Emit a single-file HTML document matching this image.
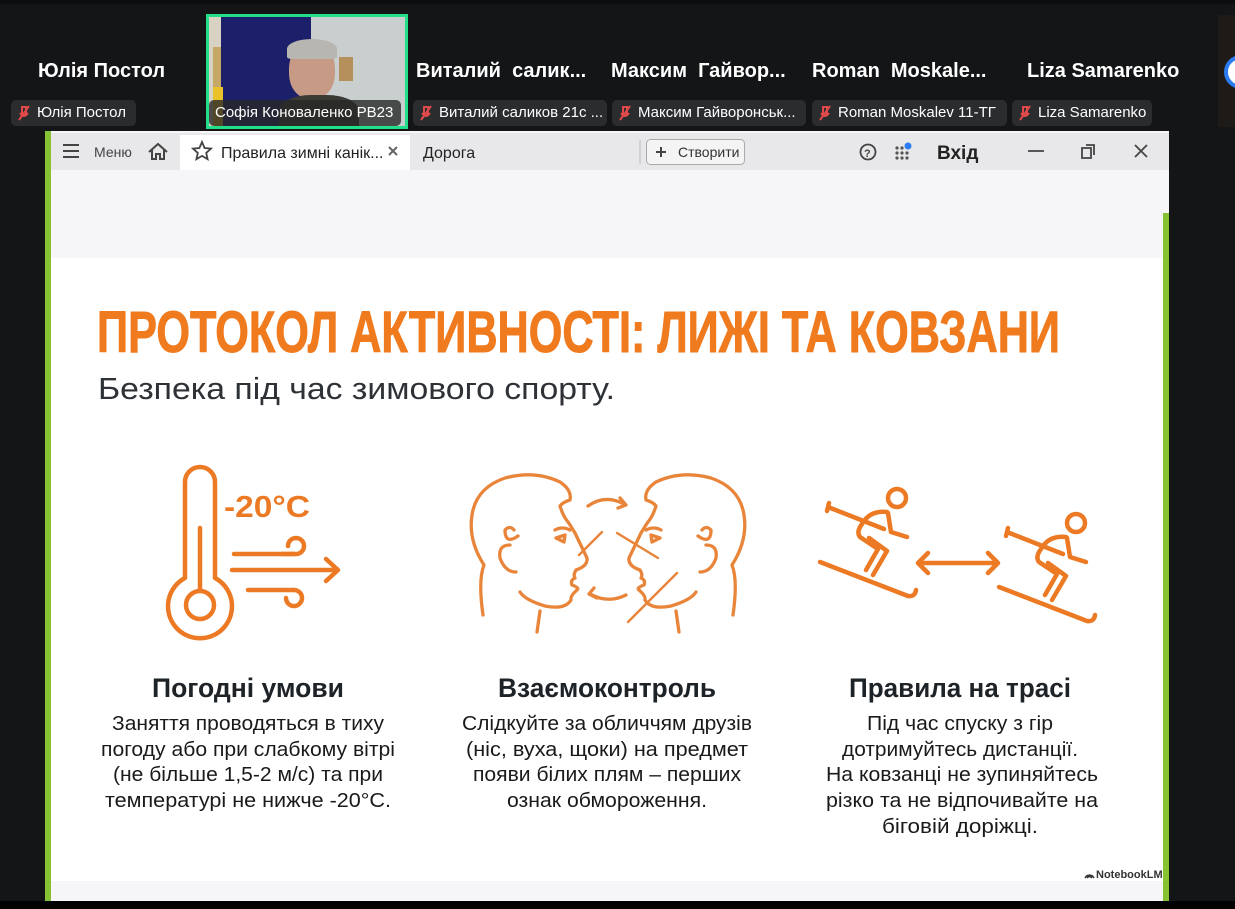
<!DOCTYPE html>
<html><head><meta charset="utf-8"><style>
*{margin:0;padding:0;box-sizing:border-box}
body{width:1235px;height:909px;background:#131517;position:relative;overflow:hidden;font-family:"Liberation Sans",sans-serif}
.abs{position:absolute}
.name{position:absolute;top:60px;color:#fff;font-weight:bold;font-size:20px;white-space:nowrap}
.pill{position:absolute;top:100px;height:26px;background:#2b2c2e;border-radius:5px;color:#fff;font-size:15px;line-height:26px;padding-left:26px;white-space:nowrap;overflow:hidden}
.pill svg{position:absolute;left:6px;top:5px}
</style></head><body>
<div class="abs" style="left:0;top:0;width:1235px;height:4px;background:#0c0d0e"></div>
<div class="name" style="left:38px">Юлія Постол</div>
<div class="name" style="left:416px">Виталий&nbsp; салик...</div>
<div class="name" style="left:611px">Максим&nbsp; Гайвор...</div>
<div class="name" style="left:812px">Roman&nbsp; Moskale...</div>
<div class="name" style="left:1027px">Liza Samarenko</div>
<div class="abs" style="left:1218px;top:15px;width:17px;height:112px;background:#1d1a17"></div>
<div class="abs" style="left:1224px;top:55px;width:34px;height:34px;border-radius:50%;border:4px solid #2b7cf0;background:#fff"></div>

<div class="abs" style="left:206px;top:14px;width:202px;height:115px;border:3px solid #22e08a;overflow:hidden;background:#c9cfcf">
 <div class="abs" style="left:0;top:0;width:12px;height:110px;background:#d8d2c4"></div>
 <div class="abs" style="left:4px;top:30px;width:8px;height:80px;background:#c5a866"></div>
 <div class="abs" style="left:12px;top:0;width:90px;height:110px;background:#1c1f6a"></div>
 <div class="abs" style="left:4px;top:70px;width:10px;height:40px;background:#e8c228"></div>
 <div class="abs" style="left:130px;top:40px;width:14px;height:24px;background:#b6905a"></div>
 <div class="abs" style="left:80px;top:26px;width:46px;height:56px;border-radius:45%;background:#c79a86"></div>
 <div class="abs" style="left:78px;top:22px;width:50px;height:20px;border-radius:50% 50% 10% 10%;background:#b7b6b0"></div>
 <div class="abs" style="left:70px;top:78px;width:80px;height:40px;border-radius:40% 40% 0 0;background:#3b3b36"></div>
</div>
<div class="pill" style="left:209px;top:100px;padding-left:6px;width:192px;background:rgba(40,40,40,.8)">Софія Коноваленко РВ23</div>

<div class="pill" style="left:11px;width:125px"><svg width="14" height="16"><path d="M5 2h4v8H5z M3 8q4 6 8 0" stroke="#e04a4a" fill="none" stroke-width="2"/><path d="M2 15L12 1" stroke="#e04a4a" stroke-width="2"/></svg>Юлія Постол</div>
<div class="pill" style="left:413px;width:194px"><svg width="14" height="16"><path d="M5 2h4v8H5z M3 8q4 6 8 0" stroke="#e04a4a" fill="none" stroke-width="2"/><path d="M2 15L12 1" stroke="#e04a4a" stroke-width="2"/></svg>Виталий саликов 21с ...</div>
<div class="pill" style="left:612px;width:194px"><svg width="14" height="16"><path d="M5 2h4v8H5z M3 8q4 6 8 0" stroke="#e04a4a" fill="none" stroke-width="2"/><path d="M2 15L12 1" stroke="#e04a4a" stroke-width="2"/></svg>Максим Гайворонськ...</div>
<div class="pill" style="left:812px;width:195px"><svg width="14" height="16"><path d="M5 2h4v8H5z M3 8q4 6 8 0" stroke="#e04a4a" fill="none" stroke-width="2"/><path d="M2 15L12 1" stroke="#e04a4a" stroke-width="2"/></svg>Roman Moskalev 11-ТГ</div>
<div class="pill" style="left:1012px;width:140px"><svg width="14" height="16"><path d="M5 2h4v8H5z M3 8q4 6 8 0" stroke="#e04a4a" fill="none" stroke-width="2"/><path d="M2 15L12 1" stroke="#e04a4a" stroke-width="2"/></svg>Liza Samarenko</div>

<div class="abs" style="left:45px;top:131px;width:1124px;height:770px;background:#f6f6f8"></div>
<div class="abs" style="left:45px;top:131px;width:6px;height:770px;background:#86c232"></div>
<div class="abs" style="left:1163px;top:213px;width:6px;height:688px;background:#86c232"></div>
<div class="abs" style="left:51px;top:133px;width:1118px;height:37px;background:#e8e8ea"></div>
<div class="abs" style="left:180px;top:135px;width:230px;height:35px;background:#fff"></div>
<svg class="abs" style="left:51px;top:133px" width="1118" height="37">
 <g stroke="#444" stroke-width="2" fill="none">
  <path d="M12 12h16M12 18h16M12 24h16"/>
  <path d="M98 19l9-8 9 8M101 17v9h4v-5h4v5h4v-9"/>
  <path d="M151 9l2.6 6 6.4.6-4.8 4.3 1.4 6.3-5.6-3.3-5.6 3.3 1.4-6.3-4.8-4.3 6.4-.6z" stroke-width="1.8"/>
  <path d="M338 14l8 8M346 14l-8 8" stroke="#666"/>
  <circle cx="817" cy="19" r="7.5" stroke-width="1.8"/>
  <path d="M977 18h16M1035 12h8v10M1031 15h9v10h-9z" stroke-width="1.8"/>
  <path d="M1084 12l12 12M1096 12l-12 12" stroke-width="1.8"/>
 </g>
 <line x1="589" y1="7" x2="589" y2="31" stroke="#bbb"/>
 <rect x="595.5" y="6.5" width="98" height="25" rx="4" fill="#f4f4f4" stroke="#aaa"/>
 <path d="M605 19h10M610 14v10" stroke="#444" stroke-width="2"/>
 <text x="627" y="24" font-size="14" fill="#333" font-family="Liberation Sans">Створити</text>
 <text x="43" y="24" font-size="14" fill="#444" font-family="Liberation Sans">Меню</text>
 <text x="170" y="25" font-size="16" fill="#222" font-family="Liberation Sans">Правила зимні канік...</text>
 <text x="372" y="25" font-size="16" fill="#222" font-family="Liberation Sans">Дорога</text>
 <text x="813" y="24" font-size="11" font-weight="bold" fill="#444" font-family="Liberation Sans">?</text>
 <g fill="#555"><circle cx="846" cy="15" r="1.6"/><circle cx="851" cy="15" r="1.6"/><circle cx="846" cy="20" r="1.6"/><circle cx="851" cy="20" r="1.6"/><circle cx="856" cy="20" r="1.6"/><circle cx="846" cy="25" r="1.6"/><circle cx="851" cy="25" r="1.6"/><circle cx="856" cy="25" r="1.6"/></g>
 <circle cx="857" cy="13" r="3.5" fill="#2b7cf0"/>
 <text x="886" y="26" font-size="19" font-weight="bold" fill="#222" font-family="Liberation Sans">Вхід</text>
</svg>

<div class="abs" style="left:51px;top:258px;width:1112px;height:623px;background:#fff"></div>
<svg class="abs" style="left:0;top:0" width="1235" height="909">
 <g font-family="Liberation Sans" text-anchor="start">
  <text x="97" y="352" font-size="58" font-weight="bold" fill="#f07a1e" stroke="#f07a1e" stroke-width="1" textLength="963" lengthAdjust="spacingAndGlyphs">ПРОТОКОЛ АКТИВНОСТІ: ЛИЖІ ТА КОВЗАНИ</text>
  <text x="98" y="399" font-size="31" fill="#2e3236" textLength="517" lengthAdjust="spacingAndGlyphs">Безпека під час зимового спорту.</text>
 </g>
 <g font-family="Liberation Sans" text-anchor="middle" fill="#1e2328">
  <text x="248" y="697" font-size="27" font-weight="bold" textLength="192" lengthAdjust="spacingAndGlyphs">Погодні умови</text>
  <text x="607" y="697" font-size="27" font-weight="bold" textLength="218" lengthAdjust="spacingAndGlyphs">Взаємоконтроль</text>
  <text x="960" y="697" font-size="27" font-weight="bold" textLength="222" lengthAdjust="spacingAndGlyphs">Правила на трасі</text>
 </g>
 <g font-family="Liberation Sans" text-anchor="middle" fill="#1a1a1a" font-size="20">
  <text x="248" y="730" textLength="272" lengthAdjust="spacingAndGlyphs">Заняття проводяться в тиху</text>
  <text x="248" y="756" textLength="294" lengthAdjust="spacingAndGlyphs">погоду або при слабкому вітрі</text>
  <text x="248" y="781" textLength="270" lengthAdjust="spacingAndGlyphs">(не більше 1,5-2 м/с) та при</text>
  <text x="248" y="807" textLength="286" lengthAdjust="spacingAndGlyphs">температурі не нижче -20°С.</text>
  <text x="607" y="730" textLength="290" lengthAdjust="spacingAndGlyphs">Слідкуйте за обличчям друзів</text>
  <text x="607" y="756" textLength="282" lengthAdjust="spacingAndGlyphs">(ніс, вуха, щоки) на предмет</text>
  <text x="607" y="781" textLength="268" lengthAdjust="spacingAndGlyphs">появи білих плям – перших</text>
  <text x="607" y="807" textLength="200" lengthAdjust="spacingAndGlyphs">ознак обмороження.</text>
  <text x="960" y="730" textLength="186" lengthAdjust="spacingAndGlyphs">Під час спуску з гір</text>
  <text x="960" y="756" textLength="236" lengthAdjust="spacingAndGlyphs">дотримуйтесь дистанції.</text>
  <text x="962" y="781" textLength="272" lengthAdjust="spacingAndGlyphs">На ковзанці не зупиняйтесь</text>
  <text x="962" y="807" textLength="272" lengthAdjust="spacingAndGlyphs">різко та не відпочивайте на</text>
  <text x="960" y="833" textLength="156" lengthAdjust="spacingAndGlyphs">біговій доріжці.</text>
 </g>
 <text x="1096" y="878" font-size="11" font-weight="bold" fill="#333" font-family="Liberation Sans">NotebookLM</text>
 <path d="M1085 878a5 5 0 0 1 9 0M1087 878a3 3 0 0 1 5 0" stroke="#333" stroke-width="1.5" fill="none"/>

 <g stroke="#ec7a24" stroke-width="4.5" fill="none" stroke-linecap="round" stroke-linejoin="round">
  <path d="M185 578V482a15 15 0 0 1 30 0v96a32 32 0 1 1-30 0z"/>
  <circle cx="200" cy="605" r="14"/>
  <path d="M200 528v62"/>
  <path d="M234 554h60M232 570h104M326 559l12 11-12 11M248 590h46"/>
  <path d="M282 554h14a8 8 0 1 0-8-8M294 590a8 8 0 1 1-8 8"/>
 </g>
 <text x="224" y="517" font-size="31" font-weight="bold" fill="#ec7a24" font-family="Liberation Sans" textLength="86" lengthAdjust="spacingAndGlyphs">-20°C</text>

 <g stroke="#e8853a" stroke-width="3.3" fill="none" stroke-linecap="round" stroke-linejoin="round">
  <g id="face">
   <path d="M483 615Q478 580 484 565Q468 540 472 515Q476 488 505 478Q535 470 560 482Q572 490 570 500Q563 502 560 506Q563 516 568 522Q567 520 575 533L587 558Q588 566 576 570Q573 575 575 578Q570 580 572 585Q580 588 577 590Q570 596 571 600Q565 610 545 606Q525 600 520 592"/>
   <path d="M518 536Q505 545 505 530Q510 525 514 530"/>
   <path d="M510 545Q498 545 500 558Q505 572 516 572"/>
   <path d="M555 530Q562 526 570 530M556 538l9-3-1 7z"/>
   <path d="M540 611L537 632"/>
  </g>
  <use href="#face" transform="translate(1216 0) scale(-1 1)"/>
  <path d="M588 506Q605 494 624 504M620 498l6 7-8 3"/>
  <path d="M626 595Q608 604 590 594M594 588l-5 6 8 4"/>
  <path d="M602 532L579 555M617 533L658 558M677 573L628 622" stroke-width="2.4"/>
 </g>

 <g stroke="#ec7a24" stroke-width="4.5" fill="none" stroke-linecap="round" stroke-linejoin="round">
  <g id="sk">
   <circle cx="897" cy="498" r="9"/>
   <path d="M828 507L884 529M829 503l-2 8"/>
   <path d="M887 512Q870 510 862 524Q856 532 860 537L878 549L866 570"/>
   <path d="M869 538L887 551L873 575"/>
   <path d="M888 513L891 532L907 537"/>
   <path d="M820 562L908 596Q915 597 916 590"/>
  </g>
  <use href="#sk" transform="translate(179 25)"/>
  <path d="M918 563H998M928 553l-10 10 10 10M988 553l10 10-10 10"/>
 </g>
</svg>
<div class="abs" style="left:0;top:901px;width:1235px;height:8px;background:#000"></div>
</body></html>
